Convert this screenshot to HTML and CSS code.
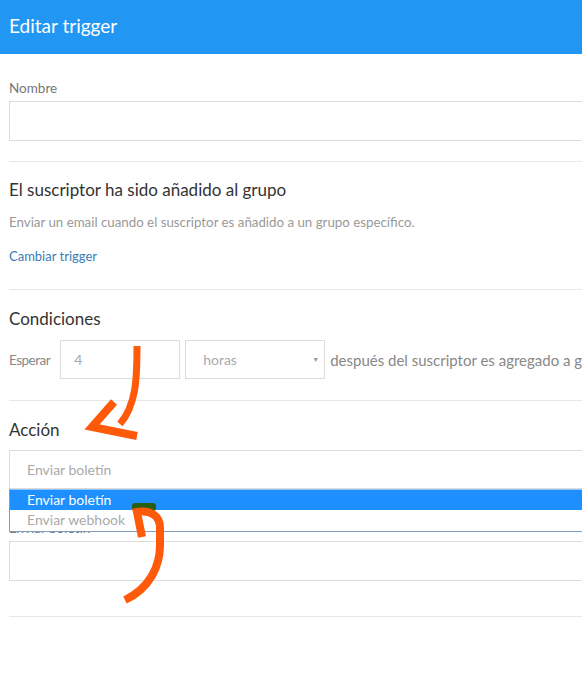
FILE: index.html
```html
<!DOCTYPE html>
<html lang="es">

<head>
    <meta charset="UTF-8">
    <title>Editar trigger</title>
    <link rel="stylesheet" href="styles.css">
</head>

<body>

    <div class="page">
        <header class="topbar">Editar trigger</header>

        <div class="content">
            <section class="block first">
                <label class="label">Nombre</label>
                <div class="field"></div>
            </section>

            <section class="block trigger">
                <h3 class="title">El suscriptor ha sido añadido al grupo</h3>
                <p class="desc">Enviar un email cuando el suscriptor es añadido a un grupo específico.</p>
                <a class="link">Cambiar trigger</a>
            </section>

            <section class="block conditions">
                <h3 class="title">Condiciones</h3>
                <div class="cond-row">
                    <span class="wait">Esperar</span>
                    <div class="field small">4</div>
                    <div class="field select">horas <span class="caret">&#9660;</span></div>
                    <span class="after">después del suscriptor es agregado a grupo</span>
                </div>
            </section>

            <section class="block action">
                <h3 class="title">Acción</h3>
                <div class="dropdown">
                    <div class="field value">Enviar boletín</div>
                    <ul class="options">
                        <li class="active">Enviar boletín</li>
                        <li>Enviar webhook</li>
                    </ul>
                </div>
                <label class="label hidden-label">Enviar boletín</label>
                <div class="field"></div>
            </section>
        </div>

        <!-- hand drawn annotation arrows -->
        <svg class="marks" width="582" height="677" viewBox="0 0 582 677">
            <rect x="132" y="503" width="24" height="8" rx="3" fill="#2a5d16" />
            <g fill="none" stroke="#ff5a0a" stroke-width="7" stroke-linecap="butt" stroke-linejoin="miter">
                <path d="M137 346 C137 380 136 405 120 424" />
                <path d="M114 402 L92 427 L137 436" stroke-width="8" />
                <path d="M125 600 C150 588 160 566 160 545 L160 528 C160 515 150 510 137 512 L142 537" stroke-width="8" />
            </g>
        </svg>
    </div>

</body>

</html>
```

FILE: styles.css
```css
* {
    box-sizing: border-box;
}

html,
body {
    margin: 0;
    padding: 0;
    height: 100%;
    overflow: hidden;
    background: #fff;
    font-family: Lato, "Open Sans", sans-serif;
}

.page {
    position: relative;
    width: 700px;
    min-height: 677px;
}

.topbar {
    height: 54px;
    padding: 14px 9px 0;
    background: #2196f3;
    color: #fff;
    font-size: 19px;
    line-height: 24px;
}

.content {
    padding-left: 9px;
}

.block {
    border-bottom: 1px solid #e8e8e8;
    padding: 17px 0 20px;
}

.block.first {
    padding-top: 26px;
}

.block.trigger {
    padding-top: 16px;
    padding-bottom: 24px;
}

.block.conditions {
    padding-bottom: 21px;
}

.block.action {
    padding-bottom: 35px;
}

.label {
    display: block;
    font-size: 13.5px;
    line-height: 16px;
    color: #777;
    margin-bottom: 5px;
}

.field {
    height: 40px;
    border: 1px solid #dcdcdc;
    background: #fff;
    font-size: 14px;
    color: #aaa;
    padding: 0 17px;
    line-height: 38px;
}

.title {
    margin: 0;
    font-weight: normal;
    font-size: 17px;
    line-height: 24px;
    color: #333;
}

.desc {
    margin: 11px 0 0;
    font-size: 13.3px;
    line-height: 18px;
    color: #999;
}

.link {
    display: block;
    margin-top: 16px;
    font-size: 13px;
    line-height: 18px;
    color: #3a7bb5;
}

.cond-row {
    display: flex;
    align-items: center;
    gap: 5px;
    margin-top: 9px;
    color: #888;
    white-space: nowrap;
}

.wait {
    font-size: 13.5px;
    letter-spacing: -0.5px;
    margin-right: 5px;
}

.after {
    font-size: 15px;
}

.cond-row .field {
    height: 39px;
    line-height: 37px;
}

.field.small {
    width: 120px;
    padding-left: 13px;
}

.field.select {
    width: 140px;
    display: flex;
    justify-content: space-between;
}

.caret {
    font-size: 7px;
    color: #999;
    margin-right: -12px;
}

.dropdown {
    position: relative;
    margin-top: 8px;
}

.dropdown .value {
    height: 39px;
    line-height: 37px;
}

.options {
    position: absolute;
    left: 0;
    right: 0;
    top: 39px;
    margin: 0;
    padding: 0;
    list-style: none;
    border: 1px solid #7f9fbd;
    border-top: none;
    background: #fff;
    font-size: 14px;
    z-index: 5;
}

.options li {
    height: 21px;
    line-height: 20px;
    padding-left: 17px;
    color: #aaa;
}

.options li.active {
    background: #1e8ffe;
    color: #fff;
    border-top: 1px solid #8fc4f5;
}

.hidden-label {
    margin: 31px 0 5px;
}

.marks {
    position: absolute;
    left: 0;
    top: 0;
    z-index: 10;
    pointer-events: none;
}
```
